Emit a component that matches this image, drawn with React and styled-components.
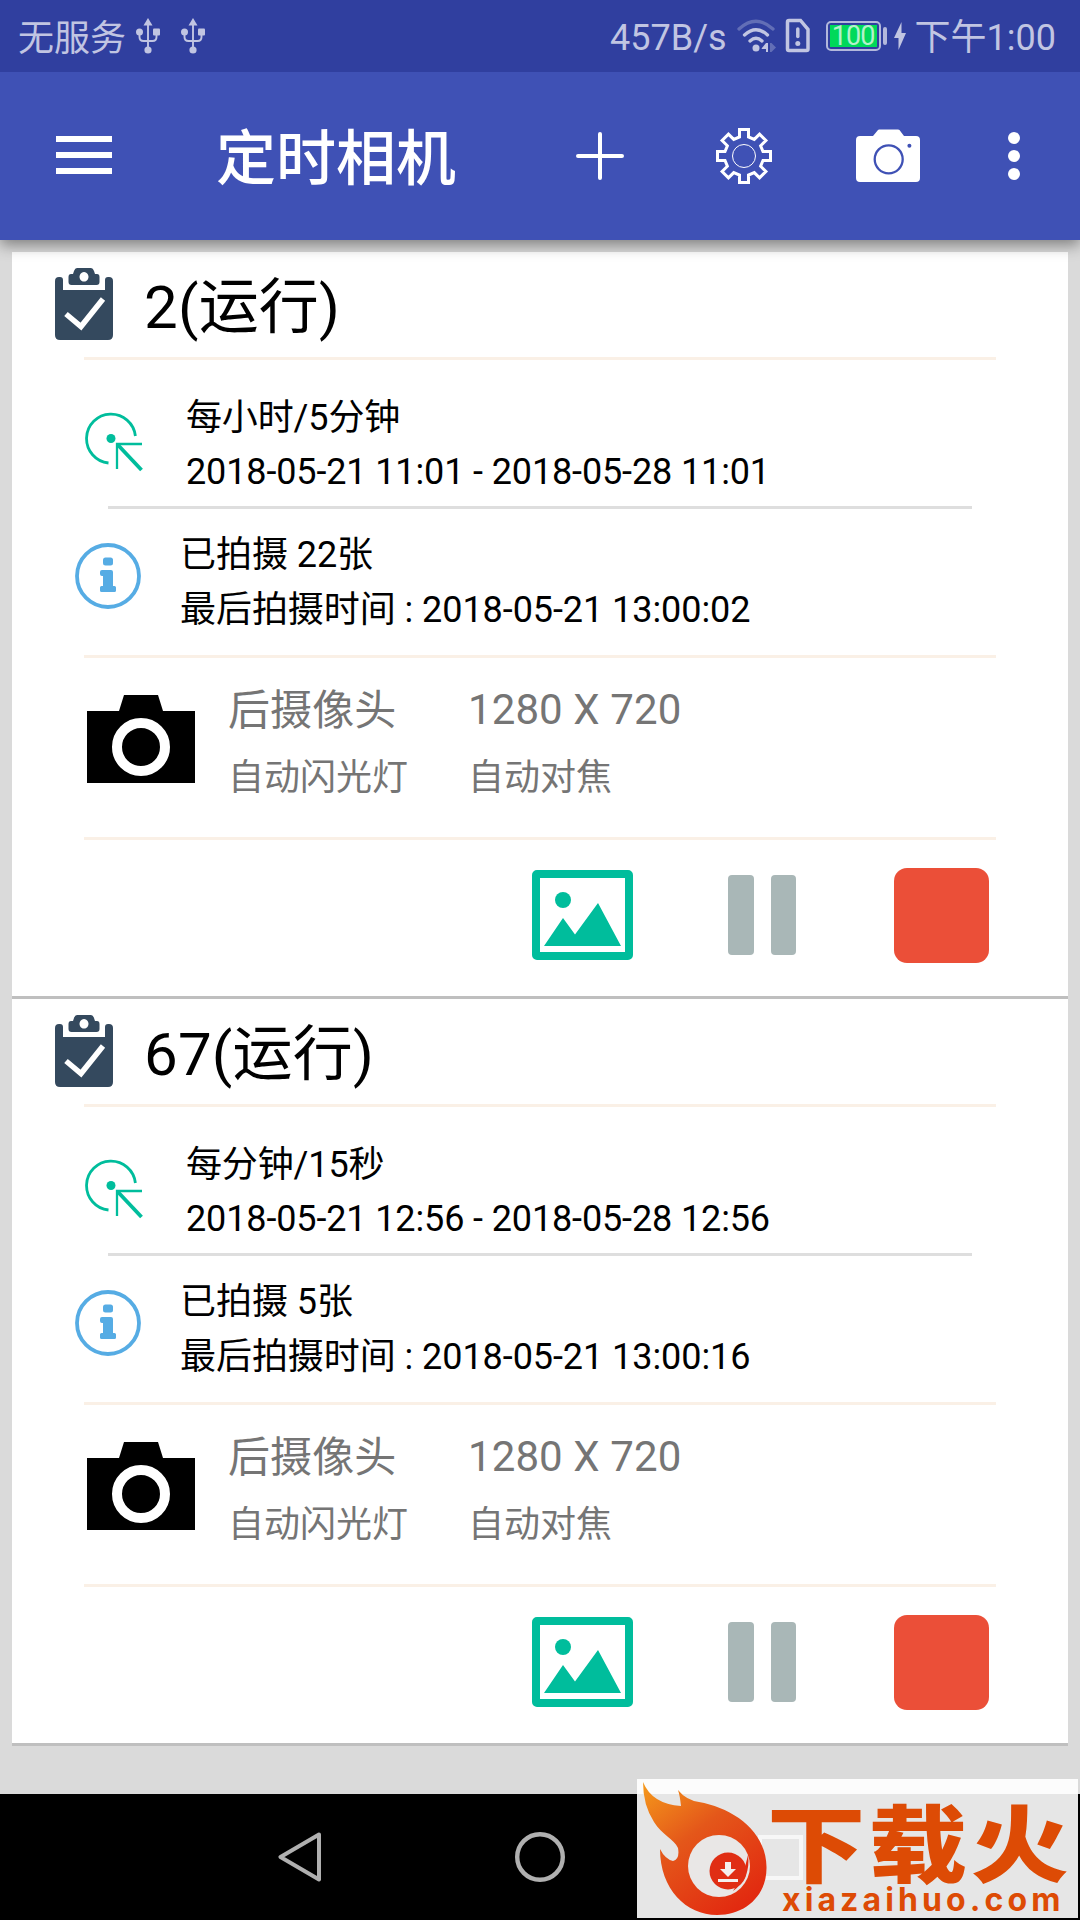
import React from "react";
import styled, { createGlobalStyle } from "styled-components";

const GlobalStyle = createGlobalStyle`
  * {
    box-sizing: border-box;
  }
  body {
    margin: 0;
    font-family: Roboto, "Noto Sans CJK SC", sans-serif;
    background: #dadada;
  }
  svg {
    display: block;
    flex-shrink: 0;
  }
`;

const Screen = styled.div`
  display: flex;
  flex-direction: column;
  width: 1080px;
  height: 1920px;
  position: relative;
  overflow: hidden;
  background: #dadada;
`;

const StatusBar = styled.div`
  display: flex;
  justify-content: space-between;
  align-items: center;
  height: 72px;
  flex-shrink: 0;
  padding: 0 24px 0 18px;
  background: #303f9f;
  color: #c1c5e2;
  font-size: 36px;
  white-space: nowrap;
  z-index: 2;
`;
const StatusGroup = styled.div`
  display: flex;
  align-items: center;
  height: 72px;
`;
const StatusText = styled.span`
  margin-left: ${(props) => props.gap || 0}px;
  padding-top: ${(props) => props.drop}px;
  line-height: 60px;
`;
const StatusIcon = styled.div`
  margin-left: ${(props) => props.gap}px;
`;
const Battery = styled.div`
  display: flex;
  align-items: center;
  margin-left: 15px;
`;
const BatteryBody = styled.div`
  width: 55px;
  height: 30px;
  padding: 2px;
  border: 2px solid #b3b8dc;
  border-radius: 5px;
`;
const BatteryLevel = styled.div`
  height: 22px;
  background: #00d95a;
  color: #b4f1cb;
  font-size: 27px;
  line-height: 22px;
  text-align: center;
  letter-spacing: -1px;
`;
const BatteryKnob = styled.div`
  width: 4px;
  height: 18px;
  margin-left: 2px;
  border-radius: 2px;
  background: #b3b8dc;
`;

const AppBar = styled.header`
  display: flex;
  align-items: center;
  height: 168px;
  flex-shrink: 0;
  padding-left: 56px;
  background: #3f51b5;
  color: #fff;
  box-shadow: 0 5px 14px rgba(0, 0, 0, 0.42);
  z-index: 1;
`;
const MenuButton = styled.div`
  display: flex;
  flex-direction: column;
  gap: 10px;
  width: 56px;
  margin-top: -2px;
`;
const MenuLine = styled.div`
  height: 6px;
  background: #fff;
`;
const Title = styled.h1`
  width: 360px;
  margin: 0 0 0 104px;
  padding-top: 7px;
  font-size: 60px;
  font-weight: 500;
  line-height: 80px;
`;
const BarButton = styled.div`
  margin-left: ${(props) => props.gap || 0}px;
`;

const TaskList = styled.main`
  flex: 1;
  padding: 12px 12px 0;
`;
const Card = styled.section`
  height: 747px;
  background: #fff;
  border-bottom: 3px solid #bfbfbf;
`;
const Divider = styled.div`
  height: 3px;
  margin: ${(props) => (props.inner ? "0 96px" : "0 72px")};
  background: ${(props) => (props.inner ? "#dedede" : "#faf0e6")};
`;
const CardHeader = styled.div`
  display: flex;
  height: 105px;
  padding: 16px 0 0 43px;
`;
const CardTitle = styled.h2`
  margin: 0 0 0 31px;
  font-size: 60px;
  font-weight: 400;
  line-height: 80px;
  letter-spacing: 0.2px;
  color: #000;
`;
const InfoRow = styled.div`
  display: flex;
  height: 146px;
  padding: ${(props) => props.pad};
`;
const InfoIcon = styled.div`
  padding-top: ${(props) => props.top}px;
`;
const InfoText = styled.div`
  margin-left: ${(props) => props.gap}px;
  font-size: 36px;
  line-height: ${(props) => props.line}px;
  letter-spacing: ${(props) => props.spacing}px;
  color: #000;
  white-space: nowrap;
`;
const CameraRow = styled.div`
  display: flex;
  height: 179px;
  padding: 22px 0 0 75px;
  color: #757575;
  white-space: nowrap;
`;
const CameraIcon = styled.div`
  padding-top: 15px;
`;
const CameraColumn = styled.div`
  width: 240px;
  margin-left: ${(props) => props.gap || 0}px;
`;
const Large = styled.div`
  padding-top: ${(props) => props.drop || 0}px;
  font-size: 42px;
  line-height: 60px;
  height: 60px;
  letter-spacing: 0.1px;
`;
const Small = styled.div`
  margin-top: 8px;
  font-size: 36px;
  line-height: 60px;
`;
const Actions = styled.div`
  display: flex;
  height: 156px;
  padding: 27px 0 0 520px;
`;
const PictureButton = styled.div`
  padding-top: 3px;
`;
const PauseButton = styled.div`
  display: flex;
  gap: 17px;
  margin: 8px 0 0 95px;
`;
const PauseBar = styled.div`
  width: 25.5px;
  height: 80px;
  border-radius: 4px;
  background: #a9b7b7;
`;
const StopButton = styled.div`
  width: 95px;
  height: 95px;
  margin: 0.5px 0 0 98px;
  border-radius: 13px;
  background: #eb4f38;
`;

const NavBar = styled.nav`
  display: flex;
  align-items: center;
  height: 126px;
  flex-shrink: 0;
  padding-left: 277px;
  background: #000;
`;
const NavIcon = styled.div`
  margin-left: ${(props) => props.gap || 0}px;
`;

const Watermark = styled.div`
  position: absolute;
  left: 637px;
  top: 1779px;
  display: flex;
  width: 441px;
  height: 139px;
  background: rgba(255, 255, 255, 0.9);
`;
const WatermarkText = styled.div`
  display: flex;
  flex-direction: column;
  color: #dd4b05;
  white-space: nowrap;
`;
const Brand = styled.div`
  height: 107px;
  padding-top: 8px;
  font-family: "Noto Sans CJK SC", sans-serif;
  font-size: 84px;
  font-weight: 900;
  line-height: 106px;
  letter-spacing: 3px;
  transform: scaleX(1.17);
  transform-origin: left;
`;
const Domain = styled.div`
  margin-left: 15px;
  font-family: Inter, sans-serif;
  font-size: 32px;
  font-weight: 700;
  line-height: 28px;
  letter-spacing: 4.1px;
`;

const UsbIcon = () => (
  <svg width="24" height="36" viewBox="0 0 24 36" fill="#c1c5e2">
    <path d="M12 0l4.5 7.5h-9z" />
    <circle cx="3.5" cy="14" r="3.5" />
    <rect x="17" y="10.5" width="7" height="7" rx="1" />
    <circle cx="12" cy="32" r="3.6" />
    <path
      d="M12 6v24M3.5 15v4q0 4 4 4h9q4 0 4-4v-4"
      fill="none"
      stroke="#c1c5e2"
      strokeWidth="1.9"
    />
  </svg>
);

const WifiIcon = () => (
  <svg width="40" height="36" viewBox="0 0 40 36" fill="none">
    <g stroke="#c1c5e2" strokeWidth="3.3" strokeLinecap="round">
      <path d="M2 11Q19 -4.5 36 11" opacity=".35" />
      <path d="M7.5 17Q19 6.5 30.5 17" />
      <path d="M13 23Q19 17.5 25 23" />
    </g>
    <circle cx="19" cy="30" r="3.5" fill="#c1c5e2" />
    <path d="M24.5 30.5L29 25h2v9h-2v-3h-4z" fill="#c1c5e2" />
    <path d="M33 25h1.5l4.5 4.5-4.5 4.5H33z" fill="#c1c5e2" opacity=".35" />
  </svg>
);

const SimIcon = () => (
  <svg width="26" height="36" viewBox="0 0 26 36" fill="none">
    <path
      d="M4 2.5h11.5l7.5 9V31q0 1.5-1.5 1.5H4Q2.5 32.5 2.5 31V4Q2.5 2.5 4 2.5z"
      stroke="#c1c5e2"
      strokeWidth="3.5"
    />
    <path
      d="M12.8 11v7.5"
      stroke="#c1c5e2"
      strokeWidth="3.5"
      strokeLinecap="round"
    />
    <circle cx="12.8" cy="25.5" r="2.5" fill="#c1c5e2" />
  </svg>
);

const BoltIcon = () => (
  <svg width="12" height="28" viewBox="0 0 12 28" fill="#c1c5e2">
    <path d="M7.5 0v11H12L4.5 28V16H0z" />
  </svg>
);

const PlusIcon = () => (
  <svg width="48" height="48" viewBox="0 0 48 48">
    <path
      d="M24 2v44M2 24h44"
      stroke="#fff"
      strokeWidth="4"
      strokeLinecap="round"
    />
  </svg>
);

const gearPoints = [0, 45, 90, 135, 180, 225, 270, 315]
  .map((deg) => {
    const a = (deg * Math.PI) / 180;
    return [
      [-4.5, -19],
      [-4.5, -26.5],
      [4.5, -26.5],
      [4.5, -19],
    ]
      .map(([x, y]) => [
        (28 + x * Math.cos(a) - y * Math.sin(a)).toFixed(2),
        (28 + x * Math.sin(a) + y * Math.cos(a)).toFixed(2),
      ])
      .join(" ");
  })
  .join(" ");

const GearIcon = () => (
  <svg width="56" height="56" viewBox="0 0 56 56" fill="none" stroke="#fff">
    <polygon points={gearPoints} strokeWidth="3" />
    <circle cx="28" cy="28" r="11.5" strokeWidth="1" />
  </svg>
);

const BarCameraIcon = () => (
  <svg width="64" height="54" viewBox="0 0 64 54">
    <path
      d="M4 7h13l5-6q.5-.5 1-.5h19q1 0 1.5.5L48 7h12q4 0 4 4v38q0 4-4 4H4q-4 0-4-4V11q0-4 4-4z"
      fill="#fff"
    />
    <circle
      cx="32.7"
      cy="30.3"
      r="14"
      fill="none"
      stroke="#3f51b5"
      strokeWidth="2.3"
    />
    <circle cx="53.4" cy="16.7" r="2" fill="#3f51b5" />
  </svg>
);

const MoreIcon = () => (
  <svg width="12" height="48" viewBox="0 0 12 48" fill="#fff">
    <circle cx="6" cy="6" r="6" />
    <circle cx="6" cy="24" r="6" />
    <circle cx="6" cy="42" r="6" />
  </svg>
);

const ClipboardIcon = () => (
  <svg width="58" height="72" viewBox="0 0 58 72" fill="#34495e">
    <path d="M4 9h1q3 0 3 3v10h42V12q0-3 3-3h1q4 0 4 4v54q0 5-5 5H5q-5 0-5-5V13q0-4 4-4z" />
    <path
      fillRule="evenodd"
      d="M22 0h14q2 0 3 3l1 3h2q2.5 0 2.5 3v5q0 3-3 3H16.5q-3 0-3-3V9q0-3 2.5-3h2l1-3q1-3 3-3zM29 4a4.5 4.8 0 1 0 .01 0z"
    />
    <path
      d="M11 46l15 12.5L48 31"
      fill="none"
      stroke="#fff"
      strokeWidth="5.5"
    />
  </svg>
);

const TargetIcon = () => (
  <svg width="58" height="60" viewBox="0 0 58 60" fill="none" stroke="#00bd9c">
    <path d="M50.4 24A24.5 24.5 0 1 0 23.5 51" strokeWidth="2.8" />
    <circle cx="26" cy="26.5" r="4.5" fill="#00bd9c" stroke="none" />
    <path d="M57 32H32v25" strokeWidth="2.3" />
    <path d="M33 33l23.5 25" strokeWidth="3.8" />
  </svg>
);

const InfoCircleIcon = () => (
  <svg width="66" height="66" viewBox="0 0 66 66" fill="#56ace4">
    <circle
      cx="33"
      cy="33"
      r="31"
      fill="none"
      stroke="#56ace4"
      strokeWidth="3.8"
    />
    <rect x="28" y="14.5" width="10" height="8" rx="2.5" />
    <path d="M27 27h9q2 0 2 2v14h1.5q1.5 0 1.5 1.5v3q0 1.5-1.5 1.5h-13q-1.5 0-1.5-1.5v-3q0-1.5 1.5-1.5H28V33h-1q-2 0-2-2v-2q0-2 2-2z" />
  </svg>
);

const CameraGlyph = () => (
  <svg width="108" height="88" viewBox="0 0 108 88">
    <path d="M37 0h34l5 16h32v72H0V16h32z" />
    <circle cx="54" cy="52" r="24" fill="none" stroke="#fff" strokeWidth="10" />
  </svg>
);

const PictureIcon = () => (
  <svg width="101" height="90" viewBox="0 0 101 90" fill="#00bd9c">
    <rect
      x="4"
      y="4"
      width="93"
      height="82"
      rx="1"
      fill="none"
      stroke="#00bd9c"
      strokeWidth="8"
    />
    <circle cx="31" cy="30" r="8" />
    <path d="M12 76l19-28 12 16.5L66 33l23 43z" />
  </svg>
);

const FlameLogo = () => (
  <svg width="130" height="139" viewBox="0 0 130 139">
    <defs>
      <linearGradient id="flame" x1="0" y1="0" x2=".7" y2="1">
        <stop offset="0" stopColor="#f59a1b" />
        <stop offset=".45" stopColor="#e4571a" />
        <stop offset="1" stopColor="#e22a10" />
      </linearGradient>
    </defs>
    <path
      d="M6 3Q15 25 44 27Q43 17 41 11Q49 21 62 23C95 29 129 51 129.5 88C130 116 109 136 80 136C49 136 23 110 23 70Q28 80 36 82Q43 80 41 69C37 60 25 56 17 43Q6 26 6 3z"
      fill="url(#flame)"
    />
    <circle cx="82" cy="87" r="31" fill="#e9e7e6" />
    <path d="M111 76Q114 99 96 112Q107 96 111 76z" fill="#e22a10" />
    <circle cx="91" cy="92" r="18.5" fill="#e02e14" />
    <path d="M88 83h6v7h5l-8 8-8-8h5zM81 100h20v3H81z" fill="#f4efee" />
  </svg>
);

const tasks = [
  {
    id: 2,
    interval: "每小时/5分钟",
    range: "2018-05-21 11:01 - 2018-05-28 11:01",
    count: 22,
    last: "2018-05-21 13:00:02",
  },
  {
    id: 67,
    interval: "每分钟/15秒",
    range: "2018-05-21 12:56 - 2018-05-28 12:56",
    count: 5,
    last: "2018-05-21 13:00:16",
  },
];

const TaskCard = ({ task }) => (
  <Card>
    <CardHeader>
      <ClipboardIcon />
      <CardTitle>{task.id}(运行)</CardTitle>
    </CardHeader>
    <Divider />
    <InfoRow pad="31px 0 0 73px">
      <InfoIcon top={21}>
        <TargetIcon />
      </InfoIcon>
      <InfoText gap={43} line={54} spacing={-0.13}>
        <div>{task.interval}</div>
        <div>{task.range}</div>
      </InfoText>
    </InfoRow>
    <Divider inner />
    <InfoRow pad="19px 0 0 63px">
      <InfoIcon top={15}>
        <InfoCircleIcon />
      </InfoIcon>
      <InfoText gap={39} line={55} spacing={-0.06}>
        <div>已拍摄 {task.count}张</div>
        <div>最后拍摄时间 : {task.last}</div>
      </InfoText>
    </InfoRow>
    <Divider />
    <CameraRow>
      <CameraIcon>
        <CameraGlyph />
      </CameraIcon>
      <CameraColumn gap={33}>
        <Large drop={1}>后摄像头</Large>
        <Small>自动闪光灯</Small>
      </CameraColumn>
      <CameraColumn>
        <Large>1280 X 720</Large>
        <Small>自动对焦</Small>
      </CameraColumn>
    </CameraRow>
    <Divider />
    <Actions>
      <PictureButton>
        <PictureIcon />
      </PictureButton>
      <PauseButton>
        <PauseBar />
        <PauseBar />
      </PauseButton>
      <StopButton />
    </Actions>
  </Card>
);

const App = () => (
  <>
    <GlobalStyle />
    <Screen>
      <StatusBar>
        <StatusGroup>
          <StatusText drop={5}>无服务</StatusText>
          <StatusIcon gap={10}>
            <UsbIcon />
          </StatusIcon>
          <StatusIcon gap={21}>
            <UsbIcon />
          </StatusIcon>
        </StatusGroup>
        <StatusGroup>
          <StatusText drop={4}>457B/s</StatusText>
          <StatusIcon gap={10}>
            <WifiIcon />
          </StatusIcon>
          <StatusIcon gap={8}>
            <SimIcon />
          </StatusIcon>
          <Battery>
            <BatteryBody>
              <BatteryLevel>100</BatteryLevel>
            </BatteryBody>
            <BatteryKnob />
          </Battery>
          <StatusIcon gap={7}>
            <BoltIcon />
          </StatusIcon>
          <StatusText gap={9} drop={4}>
            下午1:00
          </StatusText>
        </StatusGroup>
      </StatusBar>
      <AppBar>
        <MenuButton>
          <MenuLine />
          <MenuLine />
          <MenuLine />
        </MenuButton>
        <Title>定时相机</Title>
        <BarButton>
          <PlusIcon />
        </BarButton>
        <BarButton gap={92}>
          <GearIcon />
        </BarButton>
        <BarButton gap={84}>
          <BarCameraIcon />
        </BarButton>
        <BarButton gap={88}>
          <MoreIcon />
        </BarButton>
      </AppBar>
      <TaskList>
        {tasks.map((task) => (
          <TaskCard key={task.id} task={task} />
        ))}
      </TaskList>
      <NavBar>
        <NavIcon>
          <svg width="46" height="50" viewBox="0 0 46 50" fill="none">
            <path
              d="M42 2.5L3.5 25L42 47.5z"
              stroke="#b0b0b0"
              strokeWidth="4"
              strokeLinejoin="round"
            />
          </svg>
        </NavIcon>
        <NavIcon gap={192}>
          <svg width="50" height="50" viewBox="0 0 50 50" fill="none">
            <circle cx="25" cy="25" r="22.8" stroke="#b0b0b0" strokeWidth="4.4" />
          </svg>
        </NavIcon>
        <NavIcon gap={193}>
          <svg width="45" height="45" viewBox="0 0 45 45" fill="none">
            <rect
              x="2"
              y="2"
              width="41"
              height="41"
              stroke="#b0b0b0"
              strokeWidth="4"
            />
          </svg>
        </NavIcon>
      </NavBar>
      <Watermark>
        <FlameLogo />
        <WatermarkText>
          <Brand>下载火</Brand>
          <Domain>xiazaihuo.com</Domain>
        </WatermarkText>
      </Watermark>
    </Screen>
  </>
);

export default App;
